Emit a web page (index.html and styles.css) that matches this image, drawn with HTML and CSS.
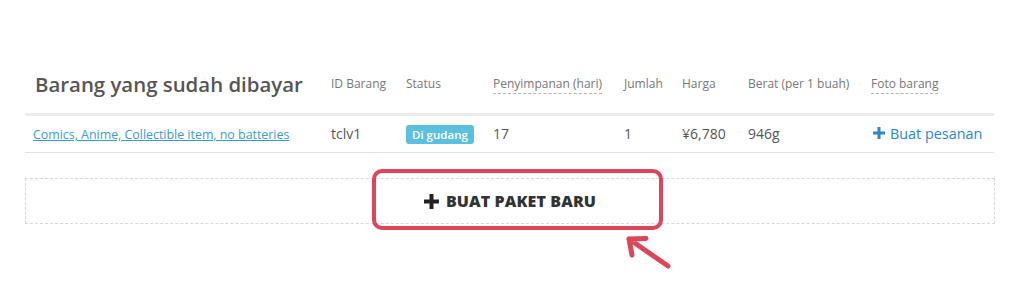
FILE: index.html
```html
<!DOCTYPE html>
<html lang="id">
<head>
<meta charset="utf-8">
<link rel="stylesheet" href="styles.css">
</head>
<body>
<div class="page">
  <table class="items">
    <colgroup>
      <col class="c1"><col class="c2"><col class="c3"><col class="c4"><col class="c5"><col class="c6"><col class="c7"><col class="c8">
    </colgroup>
    <thead>
      <tr>
        <th class="title">Barang yang sudah dibayar</th>
        <th>ID Barang</th>
        <th>Status</th>
        <th><span class="dotted">Penyimpanan (hari)</span></th>
        <th>Jumlah</th>
        <th>Harga</th>
        <th>Berat (per 1 buah)</th>
        <th><span class="dotted">Foto barang</span></th>
      </tr>
    </thead>
    <tbody>
      <tr>
        <td class="name"><a href="#">Comics, Anime, Collectible item, no batteries</a></td>
        <td>tclv1</td>
        <td><span class="badge">Di gudang</span></td>
        <td>17</td>
        <td>1</td>
        <td>¥6,780</td>
        <td>946g</td>
        <td><a class="order" href="#"><svg class="plus" viewBox="0 0 12 12" width="12" height="12"><path d="M4.5 0h3v4.5H12v3H7.5V12h-3V7.5H0v-3h4.5z" fill="currentColor"/></svg>Buat pesanan</a></td>
      </tr>
    </tbody>
  </table>
  <div class="newbox">
    <button class="newbtn"><svg class="plus" viewBox="0 0 12 12" width="14" height="14"><path d="M4.4 0h3.2v4.4H12v3.2H7.6V12H4.4V7.6H0V4.4h4.4z" fill="currentColor"/></svg>BUAT PAKET BARU</button>
    <div class="highlight"></div>
    <svg class="arrow" viewBox="0 0 50 36" width="50" height="36">
      <path d="M5 4 L44 31 M5 4 L22 3.5 M5 4 L8 20" fill="none" stroke="#dc4658" stroke-width="5" stroke-linecap="round" stroke-linejoin="round"/>
    </svg>
  </div>
</div>
</body>
</html>
```
FILE: styles.css
```css
* { box-sizing: border-box; }
html, body { margin: 0; padding: 0; background: #fff; }
body {
  font-family: "Open Sans", "Liberation Sans", sans-serif;
  color: #555;
  width: 1024px;
  height: 300px;
  overflow: hidden;
}
.page {
  padding: 54px 30px 0 25px;
}
.items {
  width: 969px;
  border-collapse: collapse;
  table-layout: fixed;
}
.c1 { width: 298px; }
.c2 { width: 75px; }
.c3 { width: 87px; }
.c4 { width: 131px; }
.c5 { width: 58px; }
.c6 { width: 66px; }
.c7 { width: 123px; }
.c8 { width: 131px; }
.items th {
  height: 60px;
  padding: 0 0 0 8px;
  text-align: left;
  font-weight: 400;
  font-size: 12px;
  color: #777;
  vertical-align: middle;
  border-bottom: 3px solid #ececec;
  white-space: nowrap;
}
.items th.title {
  padding-left: 10px;
  padding-top: 1px;
  font-size: 20.4px;
  font-weight: 600;
  color: #555;
}
.dotted {
  border-bottom: 1px dashed #b5b5b5;
  padding-bottom: 1px;
}
.items td {
  height: 38px;
  padding: 0 0 0 8px;
  font-size: 14px;
  color: #555;
  border-bottom: 1px solid #e2e2e2;
  vertical-align: middle;
  white-space: nowrap;
}
.items td.name { padding-left: 8px; }
.name a {
  font-size: 12.4px;
  color: #3a9ad9;
  text-decoration: underline;
}
.badge {
  display: inline-block;
  background: #5bc0de;
  color: #fff;
  font-size: 11.5px;
  font-weight: 600;
  line-height: 19px;
  padding: 0 6px;
  border-radius: 3px;
}
.order {
  display: inline-flex;
  align-items: center;
  gap: 5px;
  color: #2a87c9;
  font-size: 14.4px;
  text-decoration: none;
  margin-left: 2px;
}
.order .plus { width: 12px; height: 12px; }
.newbox {
  position: relative;
  margin-top: 25px;
  width: 970px;
  height: 46px;
  border: 1px dashed #d8d8d8;
  display: flex;
  justify-content: center;
  align-items: center;
}
.newbtn {
  display: inline-flex;
  align-items: center;
  gap: 7px;
  background: none;
  border: 0;
  padding: 0;
  font-family: "Open Sans", "Liberation Sans", sans-serif;
  font-weight: 800;
  font-size: 16px;
  color: #333;
  letter-spacing: 0.1px;
  margin-top: 1px;
}
.newbtn .plus { color: #222; width: 15px; height: 15px; }
.highlight {
  position: absolute;
  left: 346px;
  top: -10px;
  width: 291px;
  height: 61px;
  border: 4px solid #dc4658;
  border-radius: 10px;
}
.arrow {
  position: absolute;
  left: 598px;
  top: 56px;
}
```
